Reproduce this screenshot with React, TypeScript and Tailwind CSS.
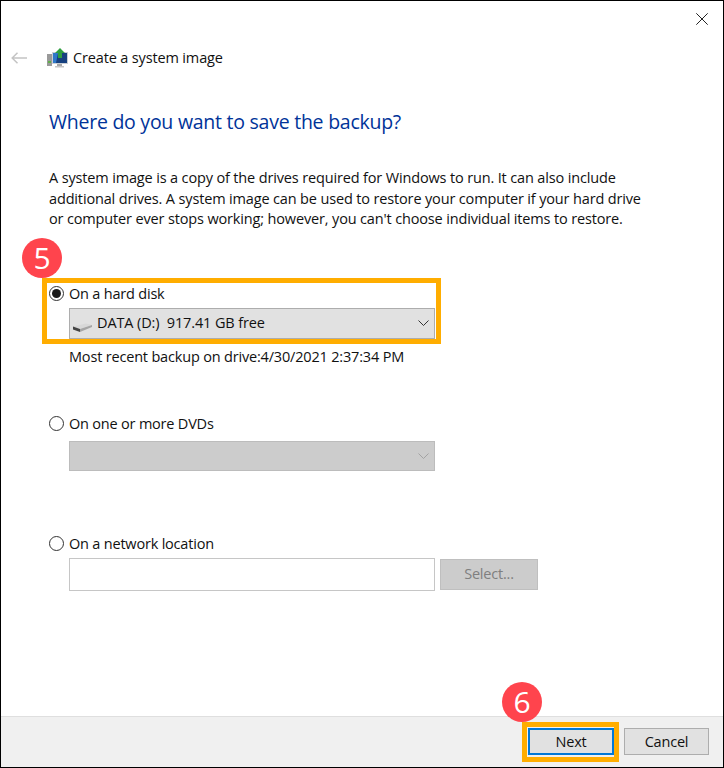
const font = { fontFamily: '"Open Sans", "Noto Sans", sans-serif' }

function Radio({ checked, label }: { checked?: boolean; label: string }) {
    return (
        <div className="flex h-5 items-center">
            <div className="flex h-[15px] w-[15px] items-center justify-center rounded-full border border-[#333333] bg-white">
                {checked && <div className="h-[9px] w-[9px] rounded-full bg-[#1a1a1a]"></div>}
            </div>
            <span className="ml-[5px] text-[14.5px] tracking-[-0.2px] text-[#111111]">{label}</span>
        </div>
    )
}

function Badge({ n, className }: { n: number; className: string }) {
    return (
        <div className={`absolute flex h-10 w-10 items-center justify-center rounded-full bg-[#ff444d] text-[30px] leading-none text-white ${className}`}>
            {n}
        </div>
    )
}

function BackArrow() {
    return (
        <svg width="16" height="12" viewBox="0 0 16 12" fill="none" stroke="#c4c4c4" strokeWidth="1.5" className="ml-[10px] shrink-0">
            <path d="M16 6H1.2M6.5 0.7L1.2 6l5.3 5.3" />
        </svg>
    )
}

function CloseIcon() {
    return (
        <svg width="12" height="12" viewBox="0 0 12 12" fill="none" stroke="#222222" strokeWidth="1" className="mr-[15px] mt-[12px]">
            <path d="M0.3 0.3l11.4 11.4M11.7 0.3L0.3 11.7" />
        </svg>
    )
}

function SystemImageIcon() {
    return (
        <svg width="21" height="20" viewBox="0 0 21 20" className="shrink-0">
            <rect x="0" y="6" width="5" height="12" fill="#9a9a9a" />
            <rect x="1" y="13" width="3" height="2" fill="#5fae4a" />
            <rect x="5" y="4" width="16" height="12" fill="#c9ced4" />
            <rect x="6" y="5" width="14" height="10" fill="#16407f" />
            <path d="M6 5h5l-2 10H6z" fill="#2f78c9" />
            <rect x="10" y="16" width="5" height="2" fill="#a8a8a8" />
            <rect x="8" y="18" width="9" height="1.5" fill="#c4c4c4" />
            <path d="M13 0l5 5h-3v5h-4V5H8z" fill="#2f9e3f" />
        </svg>
    )
}

function DriveIcon() {
    return (
        <svg width="20" height="9" viewBox="0 0 20 9" className="mt-[8px] shrink-0">
            <path d="M0 3.5L13 0.5l6 1.5-12 4z" fill="#d8d8d8" />
            <path d="M0 3.5l7 2.5v3L0 6.5z" fill="#444444" />
            <path d="M7 6l12-4v2L7 9z" fill="#a5a5a5" />
        </svg>
    )
}

function Chevron({ className }: { className: string }) {
    return (
        <svg width="11" height="6" viewBox="0 0 11 6" fill="none" stroke="currentColor" strokeWidth="1" className={className}>
            <path d="M0.5 0.5l5 5 5-5" />
        </svg>
    )
}

export default function App() {
    return (
        <div style={font} className="relative flex h-[768px] w-[724px] flex-col overflow-hidden border border-black bg-white text-[#111111]">
            <div className="flex h-[30px] justify-end">
                <CloseIcon />
            </div>

            <div className="mt-[16px] flex h-[22px] items-center">
                <BackArrow />
                <div className="ml-[20px]"><SystemImageIcon /></div>
                <span className="ml-[5px] text-[14.5px] tracking-[-0.15px]">Create a system image</span>
            </div>

            <div className="flex flex-1 flex-col pl-[48px]">
                <h1 className="mt-[38px] text-[19.5px] font-normal leading-[30px] tracking-[-0.25px] text-[#003399]">
                    Where do you want to save the backup?
                </h1>
                <p className="mt-[31px] w-[600px] text-[14.5px] leading-[20.5px] tracking-[-0.15px]">
                    A system image is a copy of the drives required for Windows to run. It can also include additional drives. A system image can be used to restore your computer if your hard drive or computer ever stops working; however, you can't choose individual items to restore.
                </p>

                <div className="mt-[54px]"><Radio checked label="On a hard disk" /></div>
                <div className="ml-[20px] mt-[4px] flex h-[31px] w-[366px] items-center border border-[#adadad] bg-[#e1e1e1] pl-[3px] pr-[4px]">
                    <DriveIcon />
                    <span className="ml-[4px] flex-1 whitespace-pre text-[14.5px] tracking-[-0.12px]">DATA (D:)  917.41 GB free</span>
                    <Chevron className="mr-[1px] text-[#333333]" />
                </div>
                <div className="ml-[20px] mt-[8px] text-[14.5px] leading-5 tracking-[-0.18px]">Most recent backup on drive:4/30/2021 2:37:34 PM</div>

                <div className="mt-[47px]"><Radio label="On one or more DVDs" /></div>
                <div className="ml-[20px] mt-[7px] flex h-[30px] w-[366px] items-center justify-end border border-[#bcbcbc] bg-[#cccccc] pr-[4px]">
                    <Chevron className="mr-[1px] text-[#a3a3a3]" />
                </div>

                <div className="mt-[63px]"><Radio label="On a network location" /></div>
                <div className="ml-[20px] mt-[4px] flex items-center">
                    <div className="h-[33px] w-[366px] border border-[#c6c6c6] bg-white"></div>
                    <div className="ml-[5px] flex h-[31px] w-[98px] items-center justify-center border border-[#bfbfbf] bg-[#cccccc] text-[14.5px] tracking-[-0.2px] text-[#7f7f7f]">
                        Select...
                    </div>
                </div>
            </div>

            <div className="flex h-[51px] items-start justify-end border-t border-[#dfdfdf] bg-[#f0f0f0] pr-[14px] pt-[11px]">
                <div className="flex h-[27px] w-[86px] items-center justify-center border-2 border-[#0078d7] bg-[#e1e1e1] text-[14.5px] tracking-[-0.2px]">Next</div>
                <div className="ml-[10px] flex h-[27px] w-[85px] items-center justify-center border border-[#adadad] bg-[#e1e1e1] text-[14.5px] tracking-[-0.2px]">Cancel</div>
            </div>

            <div className="absolute left-[41px] top-[277px] h-[66px] w-[399px] border-[5px] border-[#ffad00]"></div>
            <div className="absolute left-[521px] top-[721px] h-[40px] w-[97px] border-[5px] border-[#ffad00]"></div>
            <Badge n={5} className="left-[21px] top-[237px]" />
            <Badge n={6} className="left-[501px] top-[681px]" />
        </div>
    )
}
